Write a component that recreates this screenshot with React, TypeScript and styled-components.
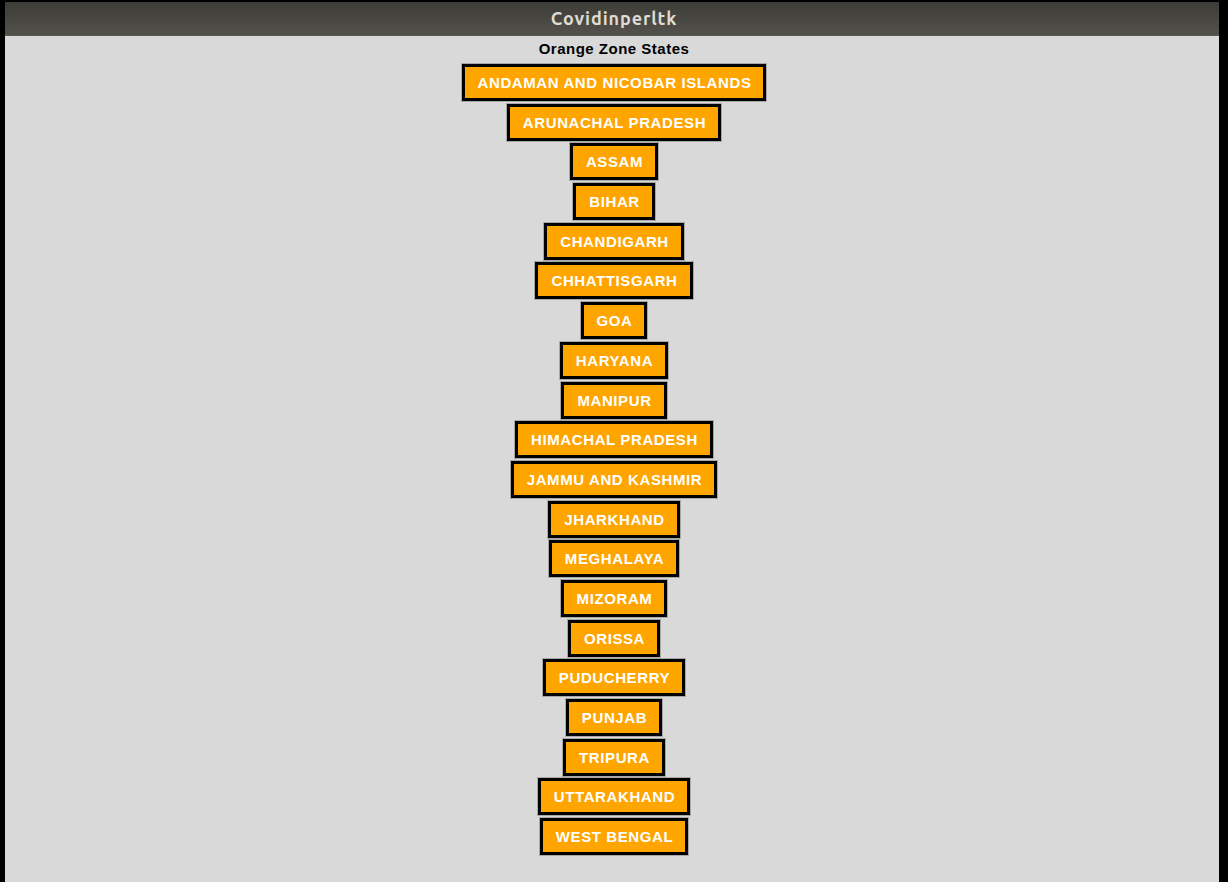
import React from "react";
import styled, { createGlobalStyle } from "styled-components";

const Global = createGlobalStyle`
  html, body { margin: 0; padding: 0; background: #000; }
  body { width: 1228px; height: 882px; overflow: hidden; }
`;

const Screen = styled.div`
  width: 1228px;
  height: 882px;
  background: #000;
  padding: 2px 9px 0 5px;
  box-sizing: border-box;
  display: flex;
`;

const Window = styled.div`
  flex: 1;
  display: flex;
  flex-direction: column;
  background: #d9d9d9;
`;

const TitleBar = styled.div`
  height: 34px;
  flex: none;
  background: linear-gradient(#3d3c37, #53514b);
  border-bottom: 1px solid #5c5a54;
  box-sizing: border-box;
  padding: 0 0 2px 4px;
  display: flex;
  align-items: center;
  justify-content: center;
  color: #dfdbd2;
  font-family: "Ubuntu", "DejaVu Sans", sans-serif;
  font-weight: bold;
  font-size: 18px;
  letter-spacing: 0.9px;
`;

const Content = styled.div`
  display: flex;
  flex-direction: column;
  align-items: center;
  padding: 3px 0 0 4px;
`;

const Heading = styled.div`
  font-family: "Liberation Sans", Arial, sans-serif;
  font-weight: bold;
  font-size: 15px;
  letter-spacing: 0.5px;
  color: #000;
  height: 25px;
  line-height: 20px;
`;

const List = styled.div`
  display: flex;
  flex-direction: column;
  align-items: center;
  gap: 2.7px;
`;

const StateBox = styled.div`
  height: 37px;
  box-sizing: border-box;
  padding: 0 12px 0 13px;
  background: #ffa500;
  border: 3px solid #000;
  box-shadow: 0 0 0 1px #a8a8a8;
  display: flex;
  align-items: center;
  justify-content: center;
  color: #fff;
  font-family: "Liberation Sans", Arial, sans-serif;
  font-weight: bold;
  font-size: 15px;
  letter-spacing: 0.6px;
  white-space: nowrap;
`;

const states = [
  "ANDAMAN AND NICOBAR ISLANDS",
  "ARUNACHAL PRADESH",
  "ASSAM",
  "BIHAR",
  "CHANDIGARH",
  "CHHATTISGARH",
  "GOA",
  "HARYANA",
  "MANIPUR",
  "HIMACHAL PRADESH",
  "JAMMU AND KASHMIR",
  "JHARKHAND",
  "MEGHALAYA",
  "MIZORAM",
  "ORISSA",
  "PUDUCHERRY",
  "PUNJAB",
  "TRIPURA",
  "UTTARAKHAND",
  "WEST BENGAL",
];

export default function App() {
  return (
    <>
      <Global />
      <Screen>
        <Window>
          <TitleBar>Covidinperltk</TitleBar>
          <Content>
            <Heading>Orange Zone States</Heading>
            <List>
              {states.map((s) => (
                <StateBox key={s}>{s}</StateBox>
              ))}
            </List>
          </Content>
        </Window>
      </Screen>
    </>
  );
}
